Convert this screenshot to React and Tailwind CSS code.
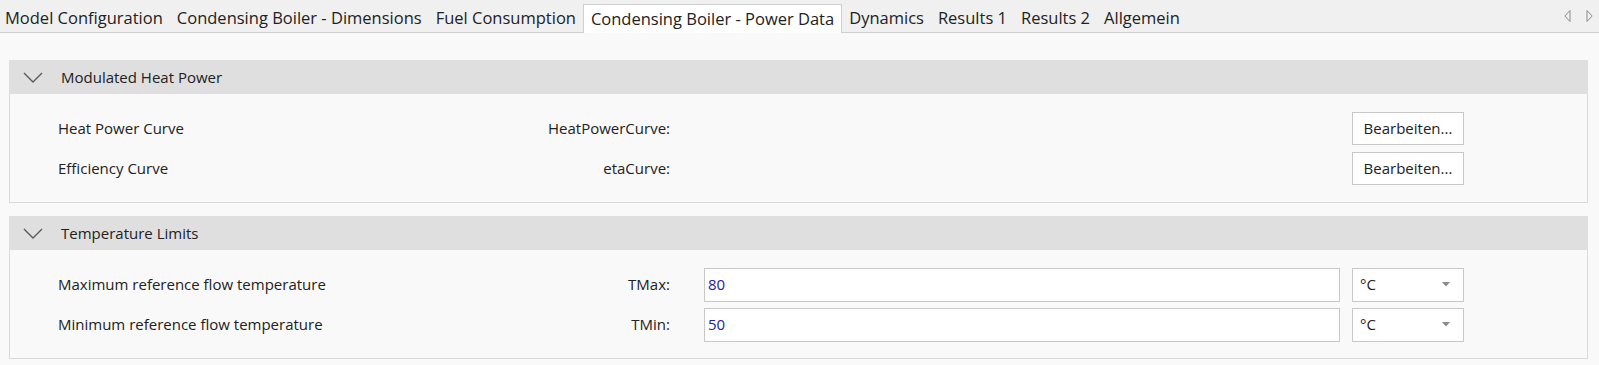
import React from 'react';

const tabs = [
  'Model Configuration',
  'Condensing Boiler - Dimensions',
  'Fuel Consumption',
  'Condensing Boiler - Power Data',
  'Dynamics',
  'Results 1',
  'Results 2',
  'Allgemein',
];

const Chevron = () => (
  <svg width="20" height="11" viewBox="0 0 20 11" className="shrink-0">
    <polyline points="1,1 10,10 19,1" fill="none" stroke="#5a5a5a" strokeWidth="1.4" />
  </svg>
);

const Section = ({ title, children }) => (
  <div className="w-[1579px]">
    <div className="h-[34px] bg-[#dfdfdf] flex items-center pl-[14px]">
      <Chevron />
      <span className="ml-[18px] text-[15px] text-[#222]">{title}</span>
    </div>
    <div className="border-x border-b border-[#d9d9d9] bg-[#f9f9f9] pt-[18px] pb-[17px] pl-[48px] flex flex-col gap-[7px]">
      {children}
    </div>
  </div>
);

const Row = ({ label, name, children }) => (
  <div className="h-[33px] flex items-center text-[15px] text-[#222]">
    <div className="w-[612px] flex justify-between items-center">
      <span>{label}</span>
      <span>{name}</span>
    </div>
    {children}
  </div>
);

const EditButton = () => (
  <button className="ml-[682px] w-[112px] h-[33px] bg-white border border-[#c8c8c8] text-[15px] text-[#222]">
    Bearbeiten...
  </button>
);

const ValueInput = ({ value }) => (
  <>
    <div className="ml-[34px] w-[636px] h-[34px] bg-white border border-[#c8c8c8] flex items-center px-[3px] text-[#2323a3]">
      {value}
    </div>
    <div className="ml-[12px] w-[112px] h-[34px] bg-white border border-[#c8c8c8] flex items-center justify-between pl-[7px] pr-[13px]">
      <span>°C</span>
      <svg width="8" height="5" viewBox="0 0 8 5">
        <polygon points="0,0 8,0 4,4.5" fill="#8a8a8a" />
      </svg>
    </div>
  </>
);

export default function App() {
  return (
    <div className="w-[1599px] h-[365px] overflow-hidden bg-[#f9f9f9] font-['Segoe_UI','Open_Sans',sans-serif]">
      {/* tab strip */}
      <div className="h-[33px] bg-[#f0f0f0] border-b border-[#cfcfcf] flex items-end">
        {tabs.map((t, i) => (
          <div
            key={t}
            className={
              i === 3
                ? 'h-[29px] -mb-px px-[7px] bg-white border border-b-0 border-[#cfcfcf] flex items-center text-[16.5px] text-[#222] whitespace-nowrap'
                : 'h-[28px] px-[7px] first:pl-[5px] flex items-center text-[16.5px] text-[#222] whitespace-nowrap'
            }
          >
            {t}
          </div>
        ))}
        <div className="ml-auto h-full flex items-center gap-[15px] pr-[6px]">
          <svg width="7" height="12" viewBox="0 0 7 12">
            <polygon points="6,0.5 6,11.5 0.8,6" fill="none" stroke="#8a8a8a" strokeWidth="1" />
          </svg>
          <svg width="7" height="12" viewBox="0 0 7 12">
            <polygon points="1,0.5 1,11.5 6.2,6" fill="none" stroke="#8a8a8a" strokeWidth="1" />
          </svg>
        </div>
      </div>

      {/* content */}
      <div className="pl-[9px] pt-[27px] flex flex-col gap-[13px]">
        <Section title="Modulated Heat Power">
          <Row label="Heat Power Curve" name="HeatPowerCurve:">
            <EditButton />
          </Row>
          <Row label="Efficiency Curve" name="etaCurve:">
            <EditButton />
          </Row>
        </Section>
        <Section title="Temperature Limits">
          <Row label="Maximum reference flow temperature" name="TMax:">
            <ValueInput value="80" />
          </Row>
          <Row label="Minimum reference flow temperature" name="TMin:">
            <ValueInput value="50" />
          </Row>
        </Section>
      </div>
    </div>
  );
}
